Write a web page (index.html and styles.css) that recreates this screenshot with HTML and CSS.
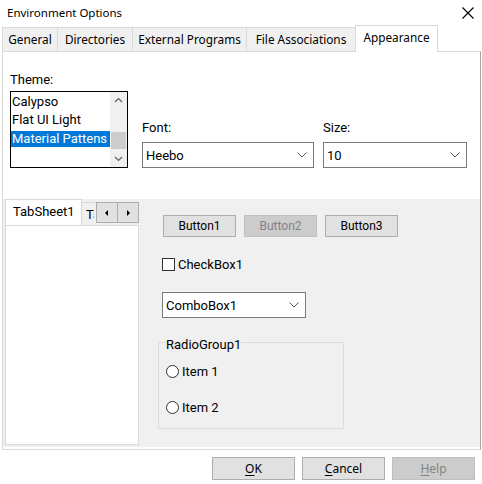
FILE: index.html
```html
<!DOCTYPE html>
<html>
<head>
<meta charset="utf-8">
<link rel="stylesheet" href="styles.css">
</head>
<body>
<div class="dialog">
  <div class="titlebar">
    <span class="title">Environment Options</span>
    <svg class="close" width="12" height="12" viewBox="0 0 12 12"><path d="M0.5 0.5 L11.5 11.5 M11.5 0.5 L0.5 11.5" stroke="#000" stroke-width="1.1" fill="none"/></svg>
  </div>
  <div class="tabstrip">
    <div class="tab w-gen">General</div>
    <div class="tab w-dir">Directories</div>
    <div class="tab w-ext">External Programs</div>
    <div class="tab w-fa">File Associations</div>
    <div class="tab active w-app">Appearance</div>
  </div>
  <div class="page">
    <div class="top">
      <div class="col theme-col">
        <div class="lbl theme-lbl">Theme:</div>
        <div class="listbox">
          <div class="items">
            <div class="item">Calypso</div>
            <div class="item">Flat UI Light</div>
            <div class="item sel">Material Pattens Dark</div>
          </div>
          <div class="vscroll">
            <svg width="17" height="17" viewBox="0 0 17 17"><path d="M5 10 L8.5 6.5 L12 10" stroke="#606060" stroke-width="1.2" fill="none"/></svg>
            <div class="track"><div class="thumb"></div></div>
            <svg width="17" height="17" viewBox="0 0 17 17"><path d="M5 7 L8.5 10.5 L12 7" stroke="#606060" stroke-width="1.2" fill="none"/></svg>
          </div>
        </div>
      </div>
      <div class="col font-col">
        <div class="lbl">Font:</div>
        <div class="combo w-font"><span>Heebo</span><svg width="10" height="6" viewBox="0 0 10 6"><path d="M0.5 0.5 L5 5 L9.5 0.5" stroke="#555" stroke-width="1" fill="none"/></svg></div>
      </div>
      <div class="col size-col">
        <div class="lbl">Size:</div>
        <div class="combo w-size"><span>10</span><svg width="10" height="6" viewBox="0 0 10 6"><path d="M0.5 0.5 L5 5 L9.5 0.5" stroke="#555" stroke-width="1" fill="none"/></svg></div>
      </div>
    </div>
    <div class="panel">
      <div class="itabs">
        <div class="itabrow">
          <div class="itab iactive">TabSheet1</div>
          <div class="itab igray"><span class="clip">TabSheet2</span></div>
          <div class="arrows">
            <div class="abtn"><svg width="4" height="6" viewBox="0 0 4 6"><path d="M3 0 L0 3 L3 6 Z" fill="#000"/></svg></div>
            <div class="abtn"><svg width="4" height="6" viewBox="0 0 4 6"><path d="M1 0 L4 3 L1 6 Z" fill="#000"/></svg></div>
          </div>
        </div>
        <div class="ipage"></div>
      </div>
      <div class="right">
        <div class="btnrow">
          <div class="btn">Button1</div>
          <div class="btn disabled">Button2</div>
          <div class="btn">Button3</div>
        </div>
        <div class="check"><span class="box"></span><span>CheckBox1</span></div>
        <div class="combo w-cb"><span>ComboBox1</span><svg width="10" height="6" viewBox="0 0 10 6"><path d="M0.5 0.5 L5 5 L9.5 0.5" stroke="#555" stroke-width="1" fill="none"/></svg></div>
        <fieldset class="group">
          <legend>RadioGroup1</legend>
          <div class="radio"><span class="circle"></span><span>Item 1</span></div>
          <div class="radio r2"><span class="circle"></span><span>Item 2</span></div>
        </fieldset>
      </div>
    </div>
  </div>
  <div class="bottom">
    <div class="dbtn"><u>O</u>K</div>
    <div class="dbtn"><u>C</u>ancel</div>
    <div class="dbtn ddis"><u>H</u>elp</div>
  </div>
</div>
</body>
</html>
```
FILE: styles.css
```css
* { box-sizing: border-box; }
html, body { margin: 0; padding: 0; background: #fff; }
body { width: 482px; height: 484px; overflow: hidden; font-family: "Noto Sans", "DejaVu Sans", sans-serif; font-size: 12px; color: #000; }
.dialog { display: flex; flex-direction: column; width: 482px; height: 484px; }
.titlebar { height: 25px; display: flex; align-items: center; justify-content: space-between; padding: 1px 7px 0 7px; }
.title { font-size: 11.5px; line-height: 16px; }
.close { margin-right: 1px; margin-top: 0; }
.tabstrip { height: 26px; display: flex; align-items: flex-end; margin-left: 2px; }
.tab { height: 24px; border: 1px solid #d9d9d9; border-bottom: none; border-right: none; background: #f0f0f0; display: flex; align-items: center; justify-content: center; font-size: 11.8px; line-height: 16px; padding-bottom: 1px; white-space: nowrap; }
.w-gen { width: 55px; }
.w-dir { width: 75px; }
.w-ext { width: 114px; }
.w-fa { width: 109px; }
.w-app { width: 83px; }
.tab.active { height: 27px; background: #fff; border-right: 1px solid #d9d9d9; margin-bottom: -1px; position: relative; z-index: 1; padding-bottom: 4px; }
.page { height: 399px; margin: 0 1px 0 2px; border: 1px solid #d9d9d9; border-right-color: #a6a6a6; display: flex; flex-direction: column; font-family: Roboto, "Noto Sans", sans-serif; font-size: 13px; }
.top { height: 147px; display: flex; align-items: flex-end; padding: 0 0 31px 7px; }
.col { display: flex; flex-direction: column; }
.lbl { line-height: 16px; margin-bottom: 6px; }
.theme-lbl { margin-bottom: 3px; }
.listbox { width: 118px; height: 77px; border: 1px solid #000; display: flex; background: #fff; }
.items { flex: 1; overflow: hidden; padding-top: 1px; }
.item { height: 18px; line-height: 18px; padding-left: 1px; white-space: nowrap; overflow: hidden; }
.item.sel { background: #0078d7; color: #fff; height: 16px; line-height: 16px; margin-top: 2px; }
.vscroll { width: 17px; background: #f0f0f0; display: flex; flex-direction: column; }
.track { flex: 1; display: flex; flex-direction: column; justify-content: flex-start; padding-top: 23px; }
.thumb { height: 17px; margin: 0 1px; background: #cdcdcd; }
.font-col { margin-left: 14px; }
.size-col { margin-left: 9px; }
.combo { height: 26px; border: 1px solid #7a7a7a; background: #fff; display: flex; align-items: center; justify-content: space-between; padding: 0 6px 0 3px; white-space: nowrap; }
.w-font { width: 172px; }
.w-size { width: 144px; }
.panel { height: 248px; background: #f0f0f0; display: flex; }
.itabs { width: 134px; margin-left: 2px; display: flex; flex-direction: column; }
.itabrow { height: 26px; display: flex; align-items: flex-end; overflow: hidden; }
.itab { white-space: nowrap; display: flex; align-items: center; }
.iactive { width: 77px; height: 27px; background: #fff; border: 1px solid #d9d9d9; border-bottom: none; padding: 0 0 3px 7px; margin-bottom: -1px; position: relative; z-index: 1; flex-shrink: 0; }
.igray { width: 14px; height: 23px; background: #f0f0f0; border-top: 1px solid #d9d9d9; padding-left: 4px; overflow: hidden; flex-shrink: 0; align-self: flex-end; padding-bottom: 0; }
.clip { display: block; width: 8px; overflow: hidden; }
.arrows { display: flex; align-self: flex-start; margin-top: 3px; flex-shrink: 0; }
.abtn { width: 22px; height: 21px; background: #e1e1e1; border: 1px solid #adadad; display: flex; align-items: center; justify-content: center; }
.abtn + .abtn { margin-left: -1px; }
.ipage { height: 220px; background: #fff; border: 1px solid #d9d9d9; }
.right { display: flex; flex-direction: column; align-items: flex-start; padding-left: 19px; }
.btnrow { display: flex; gap: 8px; margin-top: 16px; margin-left: 5px; }
.btn { width: 73px; height: 22px; border: 1px solid #adadad; background: #e1e1e1; font-size: 12px; display: flex; align-items: center; justify-content: center; }
.btn.disabled { background: #cccccc; border-color: #bfbfbf; color: #838383; }
.check { display: flex; align-items: center; margin-top: 20px; margin-left: 4px; height: 15px; }
.box { width: 13px; height: 13px; border: 1px solid #333; background: #fff; margin-right: 3px; }
.w-cb { width: 144px; margin-left: 4px; margin-top: 20px; padding-left: 3px; }
.group { margin: 13px 0 0 0; width: 186px; height: 98px; border: 1px solid #dcdcdc; padding: 0 0 0 7px; min-width: 0; }
.group legend { padding: 6px 0 0 0; line-height: 16px; margin-left: 0; }
.radio { display: flex; align-items: center; height: 16px; margin-top: 10px; }
.radio.r2 { margin-top: 20px; }
.circle { width: 13px; height: 13px; border: 1px solid #333; border-radius: 50%; background: #fff; margin-right: 3px; }
.bottom { display: flex; justify-content: flex-end; gap: 7px; padding: 7px 7px 0 0; }
.dbtn { width: 83px; height: 23px; border: 1px solid #adadad; background: #e1e1e1; display: flex; align-items: center; justify-content: center; font-size: 12px; padding-bottom: 1px; }
.dbtn u { text-decoration: underline; text-underline-offset: 2px; }
.dbtn.ddis { background: #cccccc; border-color: #bfbfbf; color: #838383; }
```
